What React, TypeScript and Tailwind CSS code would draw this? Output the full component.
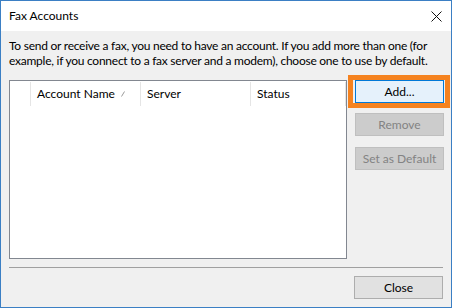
import React from 'react';

const font = { fontFamily: 'Lato, "Noto Sans", "Liberation Sans", sans-serif' };

const HeaderCell: React.FC<{ label?: string; width: string; sort?: boolean }> = ({ label, width, sort }) => (
  <div className={`${width} h-full flex items-center border-r border-[#e5e5e5] pl-[6px] relative shrink-0`}>
    {label && <span className="text-[12px] leading-none text-black">{label}</span>}
    {sort && (
      <svg className="absolute right-[15px] top-[9px]" width="4" height="6" viewBox="0 0 4 6">
        <path d="M0.5 5.5 L3.5 0.5" stroke="#9a9a9a" strokeWidth="1" fill="none" />
      </svg>
    )}
  </div>
);

const WinButton: React.FC<{ label: string; disabled?: boolean; focused?: boolean }> = ({ label, disabled, focused }) => {
  let cls = 'bg-[#e1e1e1] border-[#adadad] text-black';
  if (disabled) cls = 'bg-[#cccccc] border-[#bfbfbf] text-[#838383]';
  if (focused) cls = 'bg-[#e5f1fb] border-[#0078d7] text-black';
  return (
    <div className={`w-[89px] h-[23px] border flex items-center justify-center text-[12px] leading-none ${cls}`}>
      {label}
    </div>
  );
};

export default function App() {
  return (
    <div className="w-[452px] h-[308px] border border-[#3b7fc4] flex flex-col overflow-hidden" style={font}>
      {/* title bar */}
      <div className="h-[30px] bg-white flex items-center justify-between pl-[8px] pr-[9px] shrink-0">
        <span className="text-[12px] text-black leading-none">Fax Accounts</span>
        <svg width="11" height="11" viewBox="0 0 11 11">
          <path d="M0.5 0.5 L10.5 10.5 M10.5 0.5 L0.5 10.5" stroke="#111" strokeWidth="1" fill="none" />
        </svg>
      </div>

      {/* body */}
      <div className="flex-1 bg-[#f0f0f0] px-[8px] pt-[7px] pb-[8px] flex flex-col">
        <p className="text-[12px] leading-[15px] tracking-[-0.25px] text-black whitespace-nowrap">
          To send or receive a fax, you need to have an account. If you add more than one (for
          <br />
          example, if you connect to a fax server and a modem), choose one to use by default.
        </p>

        <div className="mt-[12px] flex gap-[8px]">
          {/* list view */}
          <div className="w-[338px] h-[179px] border border-[#828790] bg-white shrink-0">
            <div className="h-[25px] flex pt-[1px]">
              <HeaderCell width="w-[21px]" />
              <HeaderCell label="Account Name" width="w-[110px]" sort />
              <HeaderCell label="Server" width="w-[110px]" />
              <HeaderCell label="Status" width="w-[95px]" />
            </div>
          </div>

          {/* buttons */}
          <div className="flex flex-col">
            <div className="relative">
              <span className="absolute -left-[7px] -right-[6px] -top-[5px] -bottom-[5px] border-[5px] border-[#f5821f] pointer-events-none" />
              <WinButton label="Add..." focused />
            </div>
            <div className="mt-[10px]">
              <WinButton label="Remove" disabled />
            </div>
            <div className="mt-[11px]">
              <WinButton label="Set as Default" disabled />
            </div>
          </div>
        </div>

        <div className="mt-[8px] h-px bg-[#a0a0a0]" />

        <div className="mt-[8px] flex justify-end">
          <WinButton label="Close" />
        </div>
      </div>
    </div>
  );
}
